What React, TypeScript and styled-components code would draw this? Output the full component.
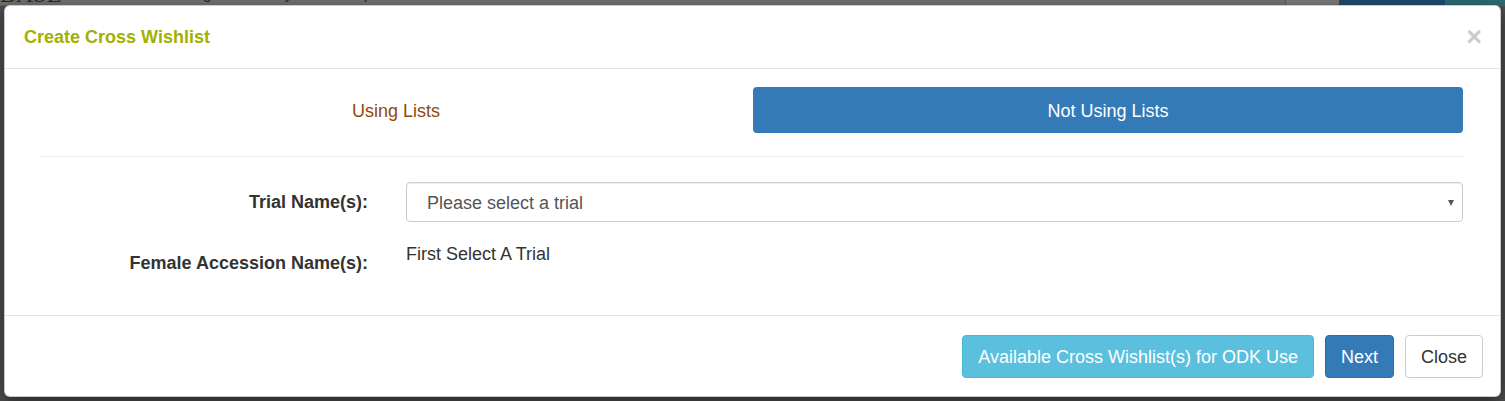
import React from "react";
import styled, { createGlobalStyle } from "styled-components";

const GlobalStyle = createGlobalStyle`
  html, body {
    margin: 0;
    padding: 0;
    background: #4e4e4e;
    overflow: hidden;
    font-family: "Liberation Sans", Arial, Helvetica, sans-serif;
  }
`;

const Page = styled.div`
  position: relative;
  width: 1505px;
  height: 401px;
  overflow: hidden;
`;

// the page behind the modal, dimmed by the backdrop
const DimNav = styled.div`
  display: flex;
  align-items: flex-end;
  height: 27px;
  margin-top: -22px;
  background: #717171;
  border-bottom: 1px solid #5f5f5f;
`;

const DimLogo = styled.span`
  flex: 0 0 80px;
  font-family: "Liberation Serif", serif;
  font-size: 24px;
  line-height: 24px;
  color: #3a2510;
  margin-bottom: -1px;
  overflow: hidden;
`;

const DimLinks = styled.div`
  display: flex;
  gap: 32px;
  flex: 1;
`;

const DimLink = styled.span`
  flex-shrink: 0;
  font-size: 16px;
  line-height: 20px;
  color: #2c2c2c;
  margin-bottom: 1px;
`;

const DimSearch = styled.div`
  flex: 0 0 53px;
  height: 27px;
  border-left: 1px solid #5a5a5a;
  background: #7a7a7a;
`;

const DimUser = styled.div<{ tone: string; w: number }>`
  flex: 0 0 ${({ w }) => w}px;
  height: 27px;
  background: ${({ tone }) => tone};
  color: #9fb3c4;
  font-size: 16px;
  line-height: 24px;
  text-align: center;
`;

const Modal = styled.div`
  position: absolute;
  top: 5px;
  left: 4px;
  width: 1497px;
  box-sizing: border-box;
  background: #fff;
  border: 1px solid rgba(0, 0, 0, 0.2);
  border-radius: 6px;
  box-shadow: 0 5px 15px rgba(0, 0, 0, 0.5);
`;

const Header = styled.div`
  display: flex;
  align-items: center;
  justify-content: space-between;
  padding: 21px 18px 21px 19px;
  border-bottom: 1px solid #e5e5e5;
`;

const Title = styled.h4`
  margin: 0;
  font-size: 18px;
  line-height: 20px;
  font-weight: bold;
  color: #a3b000;
`;

const CloseX = styled.button`
  border: 0;
  background: transparent;
  padding: 0;
  font-family: "Liberation Sans", Arial, sans-serif;
  font-size: 27px;
  font-weight: bold;
  line-height: 20px;
  color: #000;
  opacity: 0.2;
  cursor: pointer;
`;

const Body = styled.div`
  padding: 18px 37px 39px 36px;
`;

const Tabs = styled.div`
  display: grid;
  grid-template-columns: 1fr 1fr;
  gap: 2px;
`;

const Tab = styled.div<{ active?: boolean }>`
  padding: 11px 15px 9px;
  font-size: 18px;
  line-height: 26px;
  text-align: center;
  border-radius: 4px;
  background: ${({ active }) => (active ? "#337ab7" : "transparent")};
  color: ${({ active }) => (active ? "#fff" : "#8f4a0b")};
`;

const Rule = styled.hr`
  margin: 23px 0 25px;
  border: 0;
  border-top: 1px solid #eee;
`;

const FormGrid = styled.div`
  display: grid;
  grid-template-columns: 327px 1fr;
  column-gap: 38px;
  row-gap: 18px;
  align-items: start;
`;

const Label = styled.label<{ pad: number }>`
  padding-top: ${({ pad }) => pad}px;
  font-size: 18px;
  line-height: 26px;
  font-weight: bold;
  color: #333;
  text-align: right;
`;

const SelectWrap = styled.div`
  position: relative;

  &::after {
    content: "";
    position: absolute;
    right: 9px;
    top: 18px;
    border-left: 3.5px solid transparent;
    border-right: 3.5px solid transparent;
    border-top: 6px solid #555;
    pointer-events: none;
  }
`;

const Select = styled.select`
  width: 100%;
  height: 40px;
  box-sizing: border-box;
  padding: 2px 20px 0;
  appearance: none;
  -webkit-appearance: none;
  background: #fff;
  border: 1px solid #ccc;
  border-radius: 4px;
  box-shadow: inset 0 1px 1px rgba(0, 0, 0, 0.075);
  font-family: "Liberation Sans", Arial, sans-serif;
  font-size: 18px;
  color: #555;
`;

const StaticText = styled.div`
  padding-top: 1px;
  font-size: 18px;
  line-height: 26px;
  color: #333;
`;

const Footer = styled.div`
  display: flex;
  justify-content: flex-end;
  gap: 11px;
  padding: 19px 17px 18px;
  border-top: 1px solid #e5e5e5;
`;

const Button = styled.button<{ kind: "info" | "primary" | "default" }>`
  padding: 9px 15px 7px;
  font-family: "Liberation Sans", Arial, sans-serif;
  font-size: 18px;
  line-height: 25px;
  border-radius: 4px;
  border: 1px solid
    ${({ kind }) => (kind === "info" ? "#46b8da" : kind === "primary" ? "#2e6da4" : "#ccc")};
  background: ${({ kind }) => (kind === "info" ? "#5bc0de" : kind === "primary" ? "#337ab7" : "#fff")};
  color: ${({ kind }) => (kind === "default" ? "#333" : "#fff")};
  cursor: pointer;
`;

export default function App() {
  return (
    <Page>
      <GlobalStyle />
      <DimNav>
        <DimLogo>BASE</DimLogo>
        <DimLinks>
          <DimLink>Search</DimLink>
          <DimLink>Manage</DimLink>
          <DimLink>Analyze</DimLink>
          <DimLink>Maps</DimLink>
          <DimLink>About</DimLink>
        </DimLinks>
        <DimSearch />
        <DimUser tone="#1e4a6b" w={106}>timoracs</DimUser>
        <DimUser tone="#2c6a74" w={60}>Lists</DimUser>
      </DimNav>

      <Modal>
        <Header>
          <Title>Create Cross Wishlist</Title>
          <CloseX>×</CloseX>
        </Header>
        <Body>
          <Tabs>
            <Tab>Using Lists</Tab>
            <Tab active>Not Using Lists</Tab>
          </Tabs>
          <Rule />
          <FormGrid>
            <Label pad={7}>Trial Name(s):</Label>
            <SelectWrap>
              <Select defaultValue="">
                <option value="">Please select a trial</option>
              </Select>
            </SelectWrap>
            <Label pad={10}>Female Accession Name(s):</Label>
            <StaticText>First Select A Trial</StaticText>
          </FormGrid>
        </Body>
        <Footer>
          <Button kind="info">Available Cross Wishlist(s) for ODK Use</Button>
          <Button kind="primary">Next</Button>
          <Button kind="default">Close</Button>
        </Footer>
      </Modal>
    </Page>
  );
}
